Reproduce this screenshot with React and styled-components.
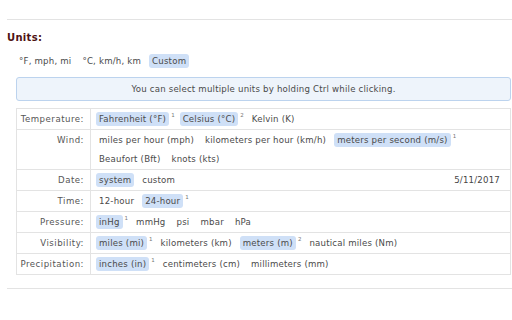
import React from 'react'
import styled, { createGlobalStyle } from 'styled-components'

const Global = createGlobalStyle`
  html, body {
    margin: 0;
    padding: 0;
    background: #ffffff;
  }
  body {
    font-family: "DejaVu Sans", Verdana, sans-serif;
    font-size: 8.6px;
    color: #444;
  }
`

const Page = styled.div`
  width: 512px;
  height: 320px;
  padding: 19px 0 0 7px;
  box-sizing: border-box;
  overflow: hidden;
`

const Section = styled.div`
  border-top: 1px solid #e3e3e3;
  border-bottom: 1px solid #e3e3e3;
  padding: 12px 0 13px 0;
`

const Heading = styled.div`
  font-weight: bold;
  font-size: 10px;
  color: #4e1212;
  letter-spacing: 0.3px;
  line-height: 12px;
`

const Presets = styled.div`
  display: flex;
  align-items: center;
  gap: 5px;
  margin: 10px 0 9px 9px;
`

const Option = styled.span`
  display: inline-block;
  padding: 1px 3px;
  line-height: 12px;
  border-radius: 3px;
  letter-spacing: 0.2px;
  white-space: nowrap;
  background: ${p => (p.$on ? '#cfe0f7' : 'transparent')};
  color: #4a4a4a;
`

const Sup = styled.sup`
  font-size: 5.5px;
  color: #777;
  vertical-align: top;
  margin-left: 2px;
  line-height: 7px;
`

const Info = styled.div`
  margin: 0 1px 0 9px;
  border: 1px solid #bcd3ee;
  background: #eef4fb;
  border-radius: 3px;
  height: 22px;
  display: flex;
  align-items: center;
  justify-content: center;
  letter-spacing: 0.2px;
  color: #4a4a4a;
`

const Table = styled.table`
  margin: 7px 0 0 9px;
  width: calc(100% - 10px);
  border-collapse: collapse;
  border: 1px solid #e0e0e0;
`

const Label = styled.td`
  width: 67px;
  text-align: right;
  vertical-align: top;
  padding: 4px 6px 0 0;
  border: 1px solid #e3e3e3;
  letter-spacing: 0.5px;
  color: #555;
  white-space: nowrap;
  line-height: 12px;
`

const Cell = styled.td`
  border: 1px solid #e3e3e3;
  padding: 3px 4px 3px 5px;
`

const Choices = styled.div`
  display: flex;
  flex-wrap: wrap;
  align-items: center;
  column-gap: 5px;
  row-gap: 5px;
`

const Item = styled.span`
  display: inline-flex;
  align-items: flex-start;
`

const Spacer = styled.span`
  flex: 1;
  text-align: right;
  padding-right: 6px;
  letter-spacing: 0.2px;
`

const rows = [
  { label: 'Temperature:', items: [['Fahrenheit (°F)', 1], ['Celsius (°C)', 2], ['Kelvin (K)']] },
  {
    label: 'Wind:',
    items: [
      ['miles per hour (mph)'],
      ['kilometers per hour (km/h)'],
      ['meters per second (m/s)', 1],
      ['Beaufort (Bft)'],
      ['knots (kts)'],
    ],
  },
  { label: 'Date:', items: [['system', 0], ['custom']], extra: '5/11/2017' },
  { label: 'Time:', items: [['12-hour'], ['24-hour', 1]] },
  { label: 'Pressure:', items: [['inHg', 1], ['mmHg'], ['psi'], ['mbar'], ['hPa']] },
  { label: 'Visibility:', items: [['miles (mi)', 1], ['kilometers (km)'], ['meters (m)', 2], ['nautical miles (Nm)']] },
  { label: 'Precipitation:', items: [['inches (in)', 1], ['centimeters (cm)'], ['millimeters (mm)']] },
]

export default function App() {
  return (
    <Page>
      <Global />
      <Section>
        <Heading>Units:</Heading>
        <Presets>
          <Option>°F, mph, mi</Option>
          <Option>°C, km/h, km</Option>
          <Option $on>Custom</Option>
        </Presets>
        <Info>You can select multiple units by holding Ctrl while clicking.</Info>
        <Table>
          <tbody>
            {rows.map(row => (
              <tr key={row.label}>
                <Label>{row.label}</Label>
                <Cell>
                  <Choices>
                    {row.items.map(([name, n]) => (
                      <Item key={name}>
                        <Option $on={n !== undefined}>{name}</Option>
                        {n ? <Sup>{n}</Sup> : null}
                      </Item>
                    ))}
                    {row.extra && <Spacer>{row.extra}</Spacer>}
                  </Choices>
                </Cell>
              </tr>
            ))}
          </tbody>
        </Table>
      </Section>
    </Page>
  )
}
